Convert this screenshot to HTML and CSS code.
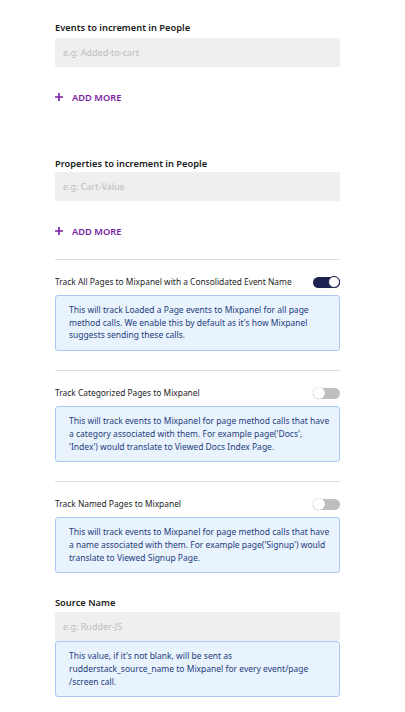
FILE: index.html
```html
<!DOCTYPE html>
<html>
<head>
<meta charset="utf-8">
<link rel="stylesheet" href="styles.css">
</head>
<body>
<div class="form">
  <div class="field first">
    <div class="label">Events to increment in People</div>
    <div class="input">e.g: Added-to-cart</div>
  </div>
  <div class="add-more">
    <svg class="plus" width="8" height="8" viewBox="0 0 8 8"><path d="M4 0V8M0 4H8" stroke="#7a1fa2" stroke-width="1.6"/></svg>
    <span>ADD MORE</span>
  </div>

  <div class="field second">
    <div class="label">Properties to increment in People</div>
    <div class="input">e.g: Cart-Value</div>
  </div>
  <div class="add-more">
    <svg class="plus" width="8" height="8" viewBox="0 0 8 8"><path d="M4 0V8M0 4H8" stroke="#7a1fa2" stroke-width="1.6"/></svg>
    <span>ADD MORE</span>
  </div>

  <div class="toggle-section">
    <div class="toggle-row">
      <span class="toggle-label">Track All Pages to Mixpanel with a Consolidated Event Name</span>
      <span class="toggle on"><span class="knob"></span></span>
    </div>
    <div class="info">This will track Loaded a Page events to Mixpanel for all page method calls. We enable this by default as it's how Mixpanel suggests sending these calls.</div>
  </div>

  <div class="toggle-section">
    <div class="toggle-row">
      <span class="toggle-label">Track Categorized Pages to Mixpanel</span>
      <span class="toggle"><span class="knob"></span></span>
    </div>
    <div class="info">This will track events to Mixpanel for page method calls that have a category associated with them. For example page('Docs', 'Index') would translate to Viewed Docs Index Page.</div>
  </div>

  <div class="toggle-section">
    <div class="toggle-row">
      <span class="toggle-label">Track Named Pages to Mixpanel</span>
      <span class="toggle"><span class="knob"></span></span>
    </div>
    <div class="info">This will track events to Mixpanel for page method calls that have a name associated with them. For example page('Signup') would translate to Viewed Signup Page.</div>
  </div>

  <div class="field source">
    <div class="label">Source Name</div>
    <div class="input">e.g: Rudder-JS</div>
    <div class="info attached">This value, if it's not blank, will be sent as rudderstack_source_name to Mixpanel for every event/page /screen call.</div>
  </div>
</div>
</body>
</html>
```

FILE: styles.css
```css
* { box-sizing: border-box; }
html, body {
  margin: 0;
  padding: 0;
  background: #ffffff;
}
body {
  font-family: "Noto Sans", "Open Sans", sans-serif;
  color: #1a1a1a;
}
.form {
  width: 285px;
  margin-left: 55px;
  padding-top: 22px;
}
.label {
  font-size: 9.3px;
  line-height: 12px;
  font-weight: 600;
  color: #1c1c1c;
  margin-bottom: 4px;
}
.input {
  height: 29px;
  background: #efefef;
  border-radius: 2px;
  padding-left: 8px;
  font-size: 9px;
  line-height: 29px;
  color: #bdbdbd;
}
.add-more {
  display: flex;
  align-items: center;
  gap: 9px;
  height: 12px;
  margin-top: 24px;
  font-size: 9.3px;
  font-weight: 600;
  color: #7a1fa2;
}
.plus { display: block; }
.field.second { margin-top: 55px; }
.field.second .label { margin-bottom: 2px; }
.add-more + .toggle-section { margin-top: 22px; }
.toggle-section {
  border-top: 1px solid #dddddd;
  padding-top: 15px;
  margin-top: 19px;
}
.toggle-row {
  display: flex;
  align-items: center;
  justify-content: space-between;
  height: 14px;
  margin-bottom: 6px;
}
.toggle-label {
  font-size: 8.4px;
  line-height: 12px;
  color: #1c1c1c;
}
.toggle {
  position: relative;
  width: 27px;
  height: 11px;
  border-radius: 6px;
  background: #bfbfbf;
}
.toggle.on { background: #1e2251; }
.knob {
  position: absolute;
  top: -0.5px;
  left: 0;
  width: 12px;
  height: 12px;
  border-radius: 50%;
  background: #ffffff;
  box-shadow: 0 0 1px rgba(0,0,0,0.3);
}
.toggle.on .knob {
  left: auto;
  right: 0;
  border: 1px solid #1e2251;
}
.info {
  background: #e8f3fd;
  border: 1px solid #a9c9f2;
  border-radius: 3px;
  padding: 8px 8px 8px 13px;
  font-size: 8.5px;
  line-height: 12.7px;
  color: #1f3c7c;
}
.field.source { margin-top: 24px; }
.field.source .label { margin-bottom: 3px; }
```
